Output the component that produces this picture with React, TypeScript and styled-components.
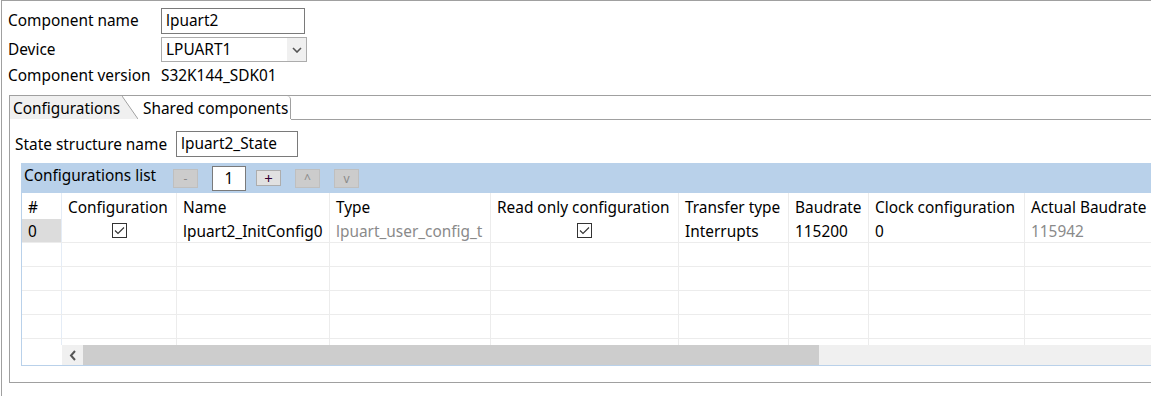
import { createGlobalStyle, styled } from 'styled-components';

const GlobalStyle = createGlobalStyle`
  html, body {
    margin: 0;
    padding: 0;
    background: #ffffff;
    overflow: hidden;
  }

  body {
    font-family: 'Noto Sans', 'Open Sans', sans-serif;
    font-size: 15.4px;
    color: #000;
  }
`;

const Page = styled.div`
  width: 1151px;
  height: 396px;
  box-sizing: border-box;
  border-top: 1px solid #a0a0a0;
  border-left: 1px solid #a0a0a0;
  margin-left: 1px;
  overflow: hidden;
`;

const Form = styled.div`
  display: grid;
  grid-template-columns: 153px 1fr;
  grid-template-rows: 26px 25px 20px;
  row-gap: 3px;
  padding: 7px 0 0 6px;
  align-items: center;
`;

const Label = styled.span`
  line-height: 22px;
`;

const TextField = styled.div<{ $width: number }>`
  box-sizing: border-box;
  width: ${(p) => p.$width}px;
  height: 26px;
  border: 1px solid #7a7a7a;
  background: #fff;
  padding: 0 4px;
  line-height: 24px;
`;

const Select = styled.div`
  box-sizing: border-box;
  display: flex;
  width: 146px;
  height: 25px;
  border: 1px solid #acacac;
  background: #fff;
  line-height: 23px;
`;

const SelectValue = styled.span`
  flex: 1;
  padding-left: 4px;
`;

const SelectButton = styled.span`
  width: 19px;
  background: #f0f0f0;
  display: flex;
  align-items: center;
  justify-content: center;
`;

const Version = styled.span`
  line-height: 20px;
  padding-top: 2px;
`;

const Folder = styled.div`
  margin: 10px 0 0 7px;
  width: 1160px;
  height: 288px;
  box-sizing: border-box;
  border: 1px solid #a0a0a0;
  border-right: none;
`;

const TabBar = styled.div`
  display: flex;
  height: 24px;
`;

const Tab = styled.div<{ $active?: boolean }>`
  position: relative;
  box-sizing: border-box;
  height: 23px;
  line-height: 22px;
  padding-top: 2px;
  white-space: nowrap;
  padding-left: ${(p) => (p.$active ? '3px' : '21px')};
  padding-right: ${(p) => (p.$active ? '0' : '2px')};
  width: ${(p) => (p.$active ? '112px' : 'auto')};
  background: ${(p) => (p.$active ? '#f0f0f0' : '#fff')};
  ${(p) =>
    !p.$active &&
    `
    border-right: 1px solid #a0a0a0;
    border-top-right-radius: 4px;
  `}

  ${(p) =>
    p.$active &&
    `
    &::after {
      content: '';
      position: absolute;
      top: 0;
      right: -16px;
      width: 16px;
      height: 23px;
      z-index: 1;
      background: linear-gradient(
        to top right,
        #f0f0f0 calc(50% - 0.8px),
        #a0a0a0 50%,
        transparent calc(50% + 0.8px)
      );
    }
  `}
`;

const TabFill = styled.div`
  flex: 1;
  border-bottom: 1px solid #a0a0a0;
  box-sizing: border-box;
  height: 24px;
`;

const TabBody = styled.div`
  padding: 11px 0 0 5px;
`;

const StateRow = styled.div`
  display: flex;
  align-items: center;
`;

const StateLabel = styled.span`
  width: 161px;
`;

const ListPanel = styled.div`
  margin: 6px 0 0 6px;
  border-left: 1px solid #b9d1ea;
  border-bottom: 1px solid #b9d1ea;
`;

const ListHeader = styled.div`
  display: flex;
  align-items: center;
  height: 30px;
  background: #b9d1ea;
  padding-left: 2px;
`;

const ListTitle = styled.span`
  width: 149px;
  margin-top: -5px;
  white-space: nowrap;
`;

const Spin = styled.div<{ $enabled?: boolean }>`
  box-sizing: border-box;
  width: 25px;
  height: ${(p) => (p.$enabled ? '16px' : '19px')};
  margin-right: 14px;
  border: 1px solid ${(p) => (p.$enabled ? '#adadad' : '#bfbfbf')};
  background: ${(p) => (p.$enabled ? '#e1e1e1' : '#cccccc')};
  color: ${(p) => (p.$enabled ? '#330033' : '#8a8a8a')};
  font-size: ${(p) => (p.$enabled ? '15px' : '12px')};
  line-height: ${(p) => (p.$enabled ? '14px' : '17px')};
  text-align: center;
`;

const Counter = styled.div`
  box-sizing: border-box;
  width: 34px;
  height: 25px;
  margin-right: 10px;
  border: 1px solid #7a7a7a;
  background: #fff;
  text-align: center;
  line-height: 23px;
`;

const Grid = styled.div`
  height: 152px;
  overflow: hidden;
`;

const Row = styled.div<{ $head?: boolean }>`
  display: grid;
  grid-template-columns: 40px 115px 153px 161px 188px 110px 80px 156px 160px;
  height: ${(p) => (p.$head ? '26px' : '24px')};
  box-sizing: border-box;
  border-bottom: ${(p) => (p.$head ? 'none' : '1px solid #ececec')};
`;

const Cell = styled.div<{ $muted?: boolean; $center?: boolean; $index?: boolean; $head?: boolean }>`
  box-sizing: border-box;
  border-right: 1px solid ${(p) => (p.$index ? '#e4ecf6' : '#ececec')};
  padding: ${(p) => (p.$head ? '3px 0 0 6px' : '2px 0 0 6px')};
  line-height: ${(p) => (p.$head ? '23px' : '21px')};
  white-space: nowrap;
  overflow: hidden;
  color: ${(p) => (p.$muted ? '#8a8a8a' : '#000')};
  display: ${(p) => (p.$center ? 'flex' : 'block')};
  align-items: center;
  justify-content: center;
  ${(p) => p.$center && 'padding: 0;'}
`;

const IndexCell = styled(Cell)<{ $selected?: boolean }>`
  background: ${(p) => (p.$selected ? '#dcdcdc' : 'transparent')};
`;

const Check = styled.span`
  box-sizing: border-box;
  width: 15px;
  height: 15px;
  border: 1px solid #333;
  background: #fff;
  display: flex;
  align-items: center;
  justify-content: center;
`;

const ScrollBar = styled.div`
  display: flex;
  height: 20px;
  margin-left: 40px;
  background: #f0f0f0;
`;

const ScrollArrow = styled.div`
  width: 21px;
  display: flex;
  align-items: center;
  justify-content: center;
`;

const Thumb = styled.div`
  width: 736px;
  background: #cdcdcd;
`;

const columns = [
  '#',
  'Configuration',
  'Name',
  'Type',
  'Read only configuration',
  'Transfer type',
  'Baudrate',
  'Clock configuration',
  'Actual Baudrate',
];

const CheckMark = () => (
  <Check>
    <svg width="11" height="9" viewBox="0 0 11 9">
      <path d="M1 4.5 L4 7.5 L10 1.5" fill="none" stroke="#333" strokeWidth="1.1" />
    </svg>
  </Check>
);

const EmptyRow = () => (
  <Row>
    {columns.map((c, i) => (
      <Cell key={c} $index={i === 0} />
    ))}
  </Row>
);

export default function App() {
  return (
    <Page>
      <GlobalStyle />
      <Form>
        <Label>Component name</Label>
        <TextField $width={144}>lpuart2</TextField>
        <Label>Device</Label>
        <Select>
          <SelectValue>LPUART1</SelectValue>
          <SelectButton>
            <svg width="10" height="6" viewBox="0 0 10 6">
              <path d="M1 1 L5 5 L9 1" fill="none" stroke="#555" strokeWidth="1.6" />
            </svg>
          </SelectButton>
        </Select>
        <Version>Component version</Version>
        <Version>S32K144_SDK01</Version>
      </Form>

      <Folder>
        <TabBar>
          <Tab $active>Configurations</Tab>
          <Tab>Shared components</Tab>
          <TabFill />
        </TabBar>
        <TabBody>
          <StateRow>
            <StateLabel>State structure name</StateLabel>
            <TextField $width={122}>lpuart2_State</TextField>
          </StateRow>

          <ListPanel>
            <ListHeader>
              <ListTitle>Configurations list</ListTitle>
              <Spin>-</Spin>
              <Counter>1</Counter>
              <Spin $enabled>+</Spin>
              <Spin>^</Spin>
              <Spin>v</Spin>
            </ListHeader>

            <Grid>
              <Row $head>
                {columns.map((c, i) => (
                  <Cell key={c} $head $index={i === 0}>
                    {c}
                  </Cell>
                ))}
              </Row>
              <Row>
                <IndexCell $index $selected>
                  0
                </IndexCell>
                <Cell $center>
                  <CheckMark />
                </Cell>
                <Cell>lpuart2_InitConfig0</Cell>
                <Cell $muted>lpuart_user_config_t</Cell>
                <Cell $center>
                  <CheckMark />
                </Cell>
                <Cell>Interrupts</Cell>
                <Cell>115200</Cell>
                <Cell>0</Cell>
                <Cell $muted>115942</Cell>
              </Row>
              <EmptyRow />
              <EmptyRow />
              <EmptyRow />
              <EmptyRow />
              <EmptyRow />
            </Grid>

            <ScrollBar>
              <ScrollArrow>
                <svg width="8" height="11" viewBox="0 0 8 11">
                  <path d="M6 1 L2 5.5 L6 10" fill="none" stroke="#555" strokeWidth="2" />
                </svg>
              </ScrollArrow>
              <Thumb />
            </ScrollBar>
          </ListPanel>
        </TabBody>
      </Folder>
    </Page>
  );
}
